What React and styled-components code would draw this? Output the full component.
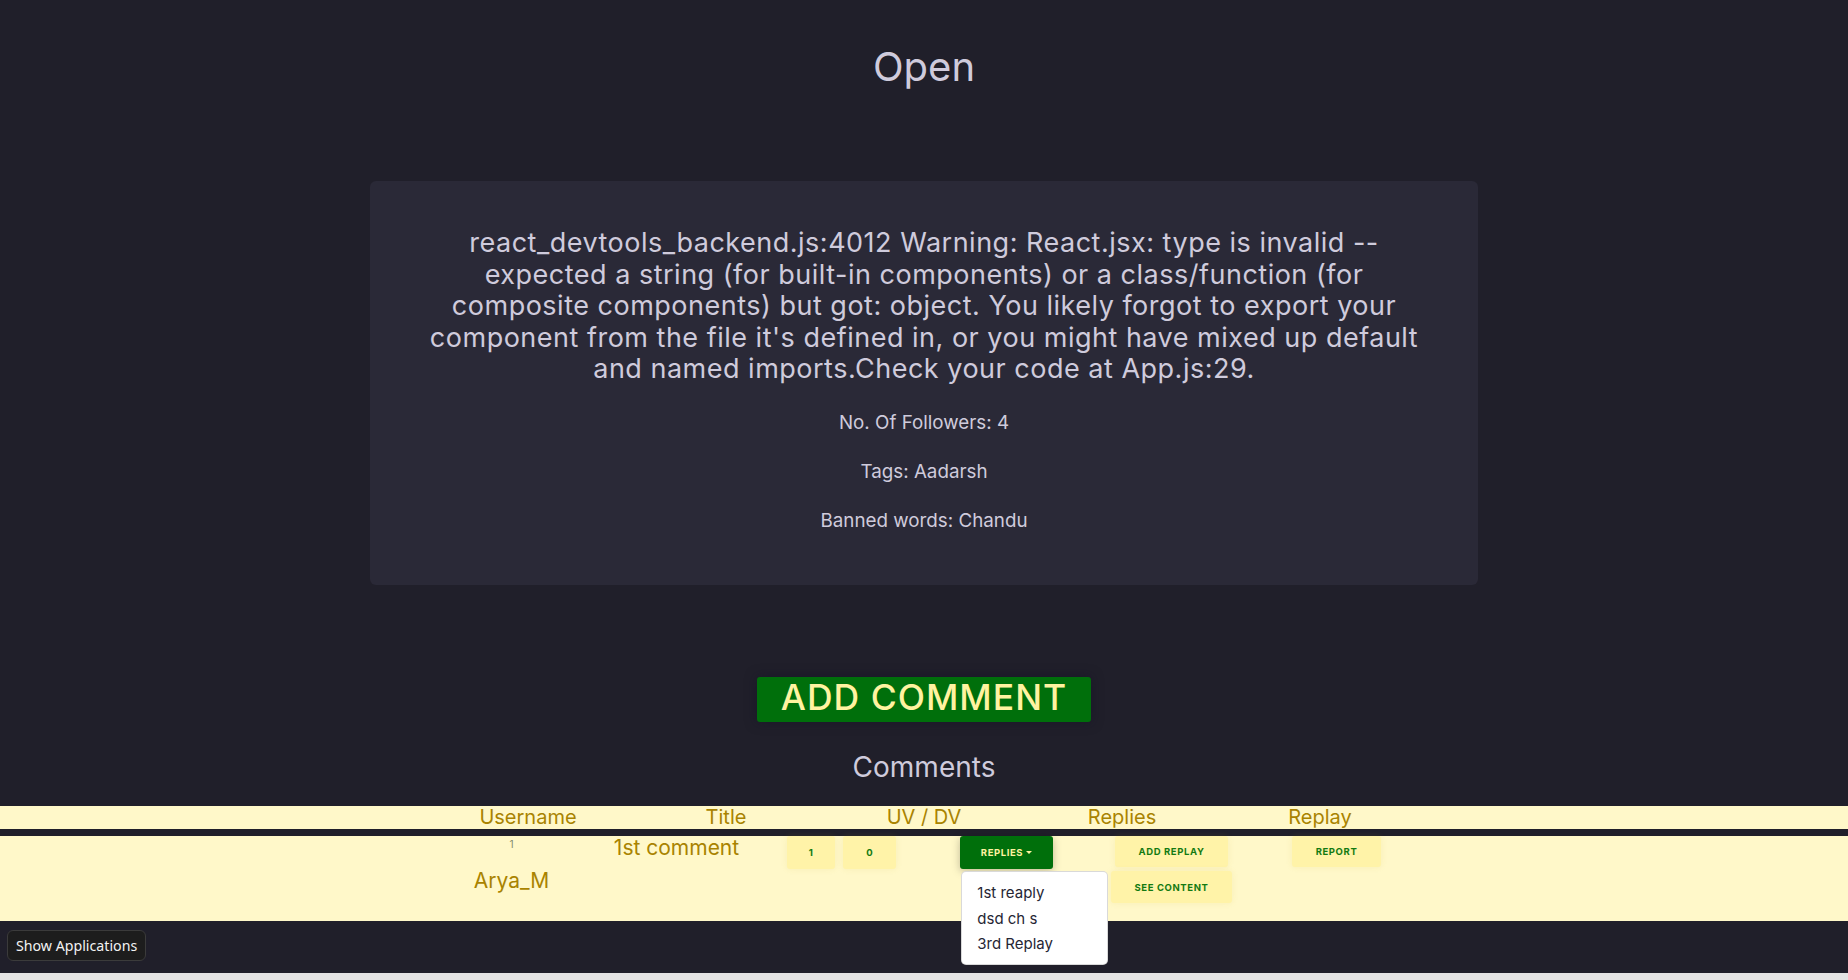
import React from "react";
import styled, { createGlobalStyle } from "styled-components";

const GlobalStyle = createGlobalStyle`
  * {
    box-sizing: border-box;
  }
  html,
  body {
    margin: 0;
    padding: 0;
    background: #e4e4e4;
  }
  body {
    font-family: "Inter", "Noto Sans", sans-serif;
  }
`;

const replies = ["1st reaply", "dsd ch s", "3rd Replay"];

const Page = styled.div`
  min-height: 973px;
  background: #201f2a;
  color: #cfcbdc;
  display: flex;
  flex-direction: column;
  align-items: center;
  padding-top: 37px;
`;

const Heading = styled.h1`
  margin: 0;
  font-size: 40px;
  font-weight: 400;
  line-height: 60px;
`;

const Card = styled.section`
  margin-top: 84px;
  width: 1108px;
  min-height: 404px;
  background: #2a2937;
  border-radius: 6px;
  padding: 46px 50px 40px;
  text-align: center;
`;

const Warning = styled.h2`
  margin: 0 auto;
  max-width: 1000px;
  font-size: 27px;
  font-weight: 400;
  line-height: 31.6px;
  letter-spacing: 0.5px;
`;

const Stats = styled.div`
  margin-top: 24px;
  display: flex;
  flex-direction: column;
  gap: 22px;
`;

const Stat = styled.p`
  margin: 0;
  font-size: 18.8px;
  line-height: 27px;
`;

const AddComment = styled.button`
  margin-top: 92px;
  height: 45px;
  padding: 0 24px 4px;
  border: none;
  border-radius: 3px;
  background: #006f0b;
  color: #fff3a0;
  font-family: inherit;
  font-size: 35.5px;
  font-weight: 500;
  line-height: 41px;
  letter-spacing: 1px;
  box-shadow: 0 0 12px rgba(20, 16, 40, 0.5);
  cursor: pointer;
`;

const SubHeading = styled.h3`
  margin: 24px 0 0;
  font-size: 28px;
  font-weight: 400;
  line-height: 42px;
`;

const Band = styled.div`
  align-self: stretch;
  background: #fff8c9;
  margin-top: ${(p) => p.$gap}px;
  height: ${(p) => p.$height}px;
  display: flex;
  justify-content: center;
`;

const HeadRow = styled.div`
  display: grid;
  grid-template-columns: repeat(5, 198px);
  color: #a98300;
  font-size: 20px;
  line-height: 23px;
  text-align: center;
`;

const BodyRow = styled.div`
  display: grid;
  grid-template-columns: repeat(6, 165px);
  align-items: start;
  justify-items: center;
  color: #a98300;
`;

const Stack = styled.div`
  display: flex;
  flex-direction: ${(p) => (p.$row ? "row" : "column")};
  align-items: center;
  gap: ${(p) => p.$gap || 0}px;
`;

const TinyId = styled.span`
  margin-top: 1px;
  font-size: 10px;
  line-height: 14px;
  color: #7f8a6c;
`;

const Name = styled.span`
  margin-top: 17px;
  font-size: 21px;
  line-height: 26px;
`;

const Title = styled.span`
  margin-top: -1px;
  font-size: 21px;
  line-height: 26px;
`;

const Chip = styled.button`
  height: ${(p) => p.$h || 33}px;
  padding: 0 ${(p) => p.$pad || 23.5}px;
  border: none;
  border-radius: 3px;
  background: ${(p) => (p.$green ? "#006f0b" : "#fff3a8")};
  color: ${(p) => (p.$green ? "#fff3a0" : "#137a12")};
  font-family: inherit;
  font-size: 9.5px;
  font-weight: 700;
  letter-spacing: 0.6px;
  text-transform: uppercase;
  box-shadow: ${(p) =>
    p.$green ? "0 2px 8px rgba(0, 0, 0, 0.25)" : "0 0 6px rgba(200, 170, 40, 0.12)"};
  cursor: pointer;
  display: inline-flex;
  align-items: center;
  gap: 3px;
`;

const Caret = styled.span`
  width: 0;
  height: 0;
  border-top: 3px solid currentColor;
  border-left: 3px solid transparent;
  border-right: 3px solid transparent;
`;

const DropWrap = styled.div`
  position: relative;
`;

const Menu = styled.ul`
  position: absolute;
  top: calc(100% + 2px);
  left: 1px;
  width: 147px;
  margin: 0;
  padding: 8px 0 7px;
  list-style: none;
  background: #ffffff;
  border: 1px solid rgba(0, 0, 0, 0.15);
  border-radius: 5px;
  z-index: 2;
`;

const MenuItem = styled.li`
  padding: 0 15px;
  font-size: 15px;
  line-height: 25.5px;
  color: #262634;
`;

const DockTip = styled.div`
  position: fixed;
  left: 7px;
  bottom: 19px;
  height: 31px;
  padding: 0 8px;
  display: flex;
  align-items: center;
  background: #1d1d1d;
  border: 1px solid #3b3b3b;
  border-radius: 6px;
  color: #f2f2f2;
  font-family: "Noto Sans", "DejaVu Sans", sans-serif;
  font-size: 14.2px;
`;

export default function App() {
  return (
    <>
      <GlobalStyle />
      <Page>
        <Heading>Open</Heading>
        <Card>
          <Warning>
            react_devtools_backend.js:4012 Warning: React.jsx: type is invalid --
            expected a string (for built-in components) or a class/function (for
            composite components) but got: object. You likely forgot to export
            your component from the file it's defined in, or you might have mixed
            up default and named imports.Check your code at App.js:29.
          </Warning>
          <Stats>
            <Stat>No. Of Followers: 4</Stat>
            <Stat>Tags: Aadarsh</Stat>
            <Stat>Banned words: Chandu</Stat>
          </Stats>
        </Card>

        <AddComment>ADD COMMENT</AddComment>
        <SubHeading>Comments</SubHeading>

        <Band $gap={18} $height={23}>
          <HeadRow>
            <span>Username</span>
            <span>Title</span>
            <span>UV / DV</span>
            <span>Replies</span>
            <span>Replay</span>
          </HeadRow>
        </Band>

        <Band $gap={7} $height={85}>
          <BodyRow>
            <Stack>
              <TinyId>1</TinyId>
              <Name>Arya_M</Name>
            </Stack>
            <Title>1st comment</Title>
            <Stack $row $gap={8}>
              <Chip $pad={22}>1</Chip>
              <Chip $pad={23}>0</Chip>
            </Stack>
            <DropWrap>
              <Chip $green $pad={20.5}>
                Replies <Caret />
              </Chip>
              <Menu>
                {replies.map((r) => (
                  <MenuItem key={r}>{r}</MenuItem>
                ))}
              </Menu>
            </DropWrap>
            <Stack $gap={4}>
              <Chip $h={31}>Add Replay</Chip>
              <Chip $h={32}>See Content</Chip>
            </Stack>
            <Chip $h={31}>Report</Chip>
          </BodyRow>
        </Band>
      </Page>
      <DockTip>Show Applications</DockTip>
    </>
  );
}
